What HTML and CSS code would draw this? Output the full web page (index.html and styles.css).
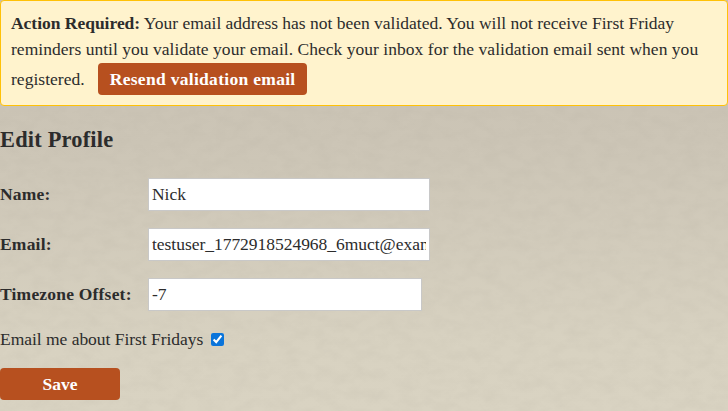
FILE: index.html
```html
<!DOCTYPE html>
<html lang="en">
<head>
<meta charset="utf-8">
<title>Edit Profile</title>
<link rel="stylesheet" href="styles.css">
</head>
<body>
<svg class="texture" aria-hidden="true"><filter id="paper"><feTurbulence type="fractalNoise" baseFrequency="0.06 0.1" numOctaves="5" seed="7"/><feColorMatrix values="0 0 0 0 0.35  0 0 0 0 0.32  0 0 0 0 0.26  0.16 0 0 0 -0.055"/></filter><rect width="100%" height="100%" filter="url(#paper)"/></svg>
<div class="page">
  <div class="notice">
    <strong>Action Required:</strong> Your email address has not been validated. You will not receive First Friday reminders until you validate your email. Check your inbox for the validation email sent when you registered. <button class="btn btn-resend" type="button">Resend validation email</button>
  </div>
  <h2 class="title">Edit Profile</h2>
  <form class="form">
    <div class="row"><label class="label" for="n">Name:</label><input class="input" id="n" type="text" value="Nick"></div>
    <div class="row"><label class="label" for="e">Email:</label><input class="input" id="e" type="text" value="testuser_1772918524968_6muct@example.com"></div>
    <div class="row"><label class="label" for="t">Timezone Offset:</label><input class="input input-num" id="t" type="text" value="-7"></div>
    <div class="check-row"><label for="c">Email me about First Fridays</label><input class="check" id="c" type="checkbox" checked></div>
    <button class="btn btn-save" type="button">Save</button>
  </form>
</div>
</body>
</html>
```
FILE: styles.css
```css
* { box-sizing: border-box; }
html, body { margin: 0; height: 411px; overflow: hidden; }
body {
  background: linear-gradient(180deg, #c8c1b3 0%, #ccc5b6 35%, #d8d2c1 85%, #d9d3c2 100%);
  color: #2c2c2c;
  font-family: "Liberation Serif", serif;
  font-size: 17.5px;
  position: relative;
}
.texture { position: absolute; inset: 0; width: 100%; height: 100%; }
.page { position: relative; }
.notice {
  background: #fff3cd;
  border: 1px solid #ffc107;
  border-radius: 4px;
  height: 106px;
  padding: 9px 10px;
  line-height: 26px;
  letter-spacing: 0.03px;
}
.notice::first-line { letter-spacing: -0.01px; }
.notice strong { letter-spacing: -0.02px; }
.btn {
  background: #b7501f;
  color: #fff;
  border: 0;
  border-radius: 4px;
  font-family: "Liberation Serif", serif;
  font-size: 17.5px;
  font-weight: 700;
  height: 32px;
  padding: 0;
}
.btn-resend { width: 209px; margin: 1px 0 0 9px; padding-top: 1px; letter-spacing: 0.3px; }
.title { margin: 20px 0 25px; font-size: 22.4px; line-height: 27px; font-weight: 700; letter-spacing: 0.2px; }
.form { display: flex; flex-direction: column; align-items: flex-start; }
.row { display: flex; align-items: center; height: 33px; margin-bottom: 17px; }
.label { width: 148px; font-weight: 700; letter-spacing: 0.2px; }
.input {
  width: 282px;
  height: 33px;
  background: #fff;
  border: 1px solid #c8c8c8;
  padding: 0 3px;
  font-family: "Liberation Serif", serif;
  font-size: 17.5px;
  letter-spacing: -0.03px;
  color: #2c2c2c;
  outline: none;
}
.input-num { width: 274px; }
.check-row { display: flex; align-items: center; height: 22px; letter-spacing: -0.03px; }
.check { width: 13px; height: 13px; margin: 0 0 0 8px; accent-color: #0a74da; }
.btn-save { width: 120px; margin-top: 18px; }
```
